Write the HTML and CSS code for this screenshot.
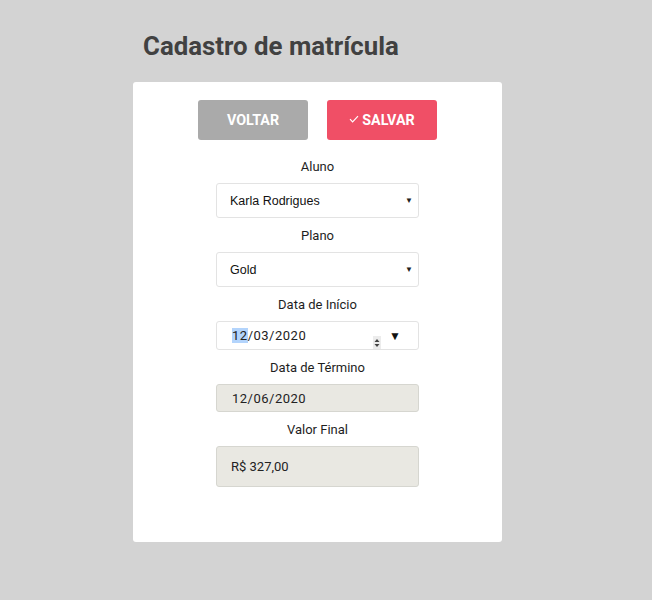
FILE: index.html
```html
<!DOCTYPE html>
<html lang="pt-BR">
<head>
<meta charset="utf-8">
<title>Cadastro de matrícula</title>
<link rel="stylesheet" href="styles.css">
</head>
<body>
<main class="page">
  <h1 class="title">Cadastro de matrícula</h1>
  <section class="card">
    <div class="actions">
      <button class="btn btn-back">VOLTAR</button>
      <button class="btn btn-save"><svg class="check" viewBox="0 0 10 8" width="10" height="8"><path d="M1 4.2 L3.6 6.8 L9 1.2" fill="none" stroke="#fff" stroke-width="1.2"/></svg>SALVAR</button>
    </div>
    <div class="field">
      <label class="label">Aluno</label>
      <div class="select"><span>Karla Rodrigues</span><span class="arrow">▼</span></div>
    </div>
    <div class="field">
      <label class="label">Plano</label>
      <div class="select"><span>Gold</span><span class="arrow">▼</span></div>
    </div>
    <div class="field">
      <label class="label">Data de Início</label>
      <div class="date"><span class="date-text"><span class="sel">12</span>/03/2020</span>
        <span class="spin"><svg viewBox="0 0 8 13" width="8" height="13"><path d="M4 3 L6.5 6 H1.5 Z M1.5 8 H6.5 L4 11 Z" fill="#444"/></svg></span>
        <span class="date-arrow">▼</span></div>
    </div>
    <div class="field">
      <label class="label">Data de Término</label>
      <div class="input disabled short">12/06/2020</div>
    </div>
    <div class="field">
      <label class="label">Valor Final</label>
      <div class="input disabled tall">R$ 327,00</div>
    </div>
  </section>
</main>
</body>
</html>
```
FILE: styles.css
```css
html, body {
  margin: 0;
  padding: 0;
  background: #d3d3d3;
  font-family: Roboto, "Liberation Sans", sans-serif;
}
.page {
  width: 369px;
  margin-left: 133px;
  padding-top: 31px;
}
.title {
  margin: 0 0 20px 10px;
  font-size: 25.8px;
  line-height: 31px;
  font-weight: 700;
  color: #414141;
}
.card {
  background: #fff;
  border-radius: 3px;
  height: 460px;
  box-sizing: border-box;
  padding-top: 18px;
  display: flex;
  flex-direction: column;
  align-items: center;
}
.actions {
  display: flex;
  gap: 19px;
  margin-bottom: 18px;
}
.btn {
  width: 110px;
  height: 40px;
  border: none;
  border-radius: 3px;
  color: #fff;
  font-family: Roboto, sans-serif;
  font-weight: 700;
  font-size: 14.3px;
  display: flex;
  align-items: center;
  justify-content: center;
  padding: 0;
}
.btn-back { background: #aaaaaa; }
.btn-save { background: #f04f66; }
.check { margin-right: 3px; margin-top: -3px; }
.field {
  display: flex;
  flex-direction: column;
  align-items: center;
}
.label {
  font-size: 13px;
  line-height: 17px;
  color: #1e1e1e;
  margin-bottom: 8px;
}
.select, .date, .input {
  width: 203px;
  box-sizing: border-box;
  border: 1px solid #e3e3e3;
  border-radius: 3px;
  display: flex;
  align-items: center;
}
.select {
  height: 35px;
  padding: 0 5px 0 13px;
  justify-content: space-between;
  font-family: "Liberation Sans", Arial, sans-serif;
  font-size: 12.5px;
  color: #111;
  margin-bottom: 9px;
}
.arrow { font-size: 8px; color: #222; }
.date {
  height: 29px;
  padding: 0 0 0 15px;
  font-size: 13px;
  color: #222;
  margin-bottom: 9px;
}
.date-text { width: 141px; letter-spacing: 0.5px; }
.sel { background: #b3d4fc; }
.spin { display: flex; margin: 14px 0 0 0; background: #ececec; }
.date-arrow { margin-left: 8px; font-size: 12px; color: #111; }
.input {
  padding-left: 15px;
  font-size: 13px;
  color: #222;
}
.disabled {
  background: #e9e8e2;
  border-color: #d6d6d0;
}
.short { height: 28px; margin-bottom: 9px; letter-spacing: 0.5px; }
.tall { height: 41px; padding-left: 14px; }
```
